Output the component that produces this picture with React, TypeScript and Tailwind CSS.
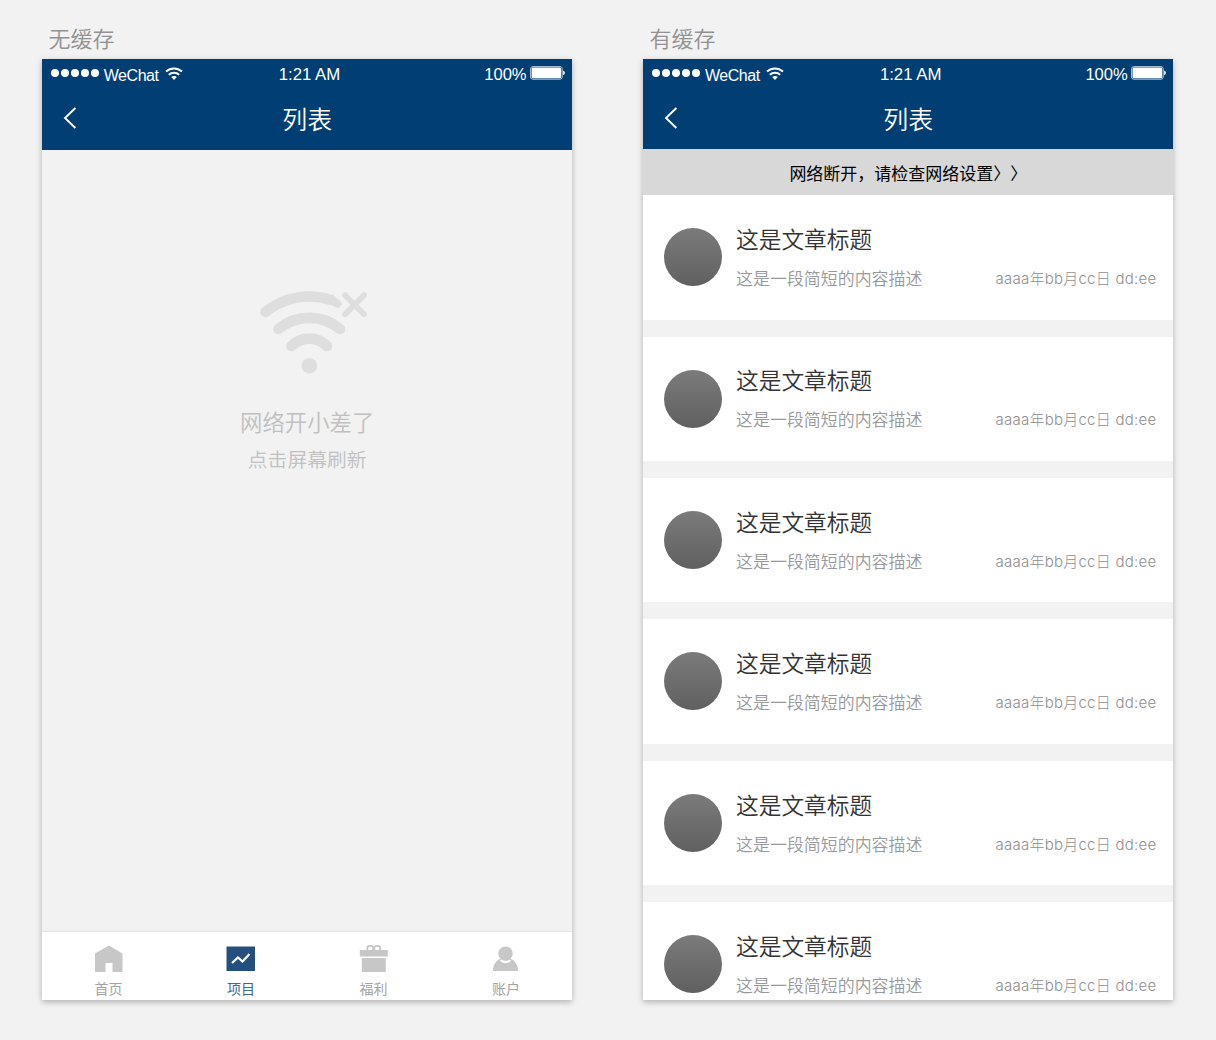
import React from "react";

const cjk = "font-['Noto_Sans_CJK_SC',sans-serif]";
const latin = "font-['Liberation_Sans','Noto_Sans_CJK_SC',sans-serif]";
const dateFont = "font-['Inter','Noto_Sans_CJK_SC',sans-serif]";

function StatusBar() {
  return (
    <div className={`${latin} grid h-[30px] grid-cols-[236.500px_1fr_88px] items-center whitespace-nowrap text-white`}>
      <div className="-mt-px flex items-center pl-[9px]">
        <div className="-mt-px flex gap-[1.900px]">
          {[0, 1, 2, 3, 4].map((i) => (
            <span key={i} className="size-2 rounded-full bg-white" />
          ))}
        </div>
        <span className="mt-[4px] ml-[5px] w-[61px] text-[16px] leading-[20px] tracking-[-0.450px]">WeChat</span>
        <svg width="18" height="14" viewBox="0 0 18 14" fill="none" stroke="#fff">
          <path d="M1 4.600C5.500.500 12.500.500 17 4.600" strokeWidth="2" />
          <path d="M3.800 7.700c3-2.700 7.400-2.700 10.400 0" strokeWidth="1.900" />
          <path d="M6.200 10.100c1.600-1.400 4-1.400 5.600 0L9 13z" fill="#fff" stroke="none" />
        </svg>
      </div>
      <span className="mt-[2px] text-[16.800px] leading-[20px]">1:21 AM</span>
      <div className="flex items-center">
        <span className="mt-[2px] w-[46px] text-[16.600px] leading-[20px]">100%</span>
        <svg className="-mt-[2px]" width="36" height="14" viewBox="0 0 36 14">
          <rect x="0.6" y="0.6" width="31.6" height="12.6" rx="2.2" fill="none" stroke="#b5c8da" strokeWidth="1" />
          <rect x="1.6" y="1.6" width="29.6" height="10.6" rx="1.2" fill="#fff" />
          <path d="M33.200 4.600c2.200.800 2.200 3.800 0 4.600z" fill="#fff" />
        </svg>
      </div>
    </div>
  );
}

function Header({ className }: { className: string }) {
  return (
    <header className={`bg-[#003e73] ${className}`}>
      <StatusBar />
      <div className="grid h-[58px] grid-cols-[1fr_auto_1fr] items-center">
        <svg className="ml-[21px]" width="14" height="22" viewBox="0 0 14 22" fill="none" stroke="#fff" strokeWidth="1.9">
          <path d="M12.400 1L2 11l10.400 10" />
        </svg>
        <h1 className={`${cjk} text-[25px] leading-[36px] font-[350] text-white`}>列表</h1>
      </div>
    </header>
  );
}

function OfflineIcon() {
  return (
    <svg width="112" height="90" viewBox="258 287 112 90" fill="none" stroke="#dedede" strokeLinecap="round">
      <g strokeWidth="10.6">
        <path d="M265.500 312A71 71 0 0 1 309 296.500" />
        <path d="M309 296.500A71 71 0 0 1 331 300" />
        <path d="M278.500 329A48 48 0 0 1 340 329" />
        <path d="M291.500 346A25 25 0 0 1 327 346" />
      </g>
      <path d="M333 295l8 7.500c.8.8.8 1.500 0 2.500-1.600 2.600-3 3-5 1.800l-6-3z" fill="#dedede" strokeWidth="1" />
      <circle cx="309.4" cy="365.8" r="7.8" fill="#dedede" stroke="none" />
      <path d="M345 295.200l19 19M364 295.200l-19 19" strokeWidth="5.8" />
    </svg>
  );
}

const tabs = [
  {
    label: "首页",
    active: false,
    icon: <path d="M1 8.500L14.800.5 28.500 8.500V27H18.500V18H11.500V27H1z" />,
  },
  {
    label: "项目",
    active: true,
    icon: (
      <>
        <path d="M.5 1.500h28.500v24.500H.5z" />
        <path d="M6 18l6-5.500 4.500 4L23.500 9" fill="none" stroke="#fff" strokeWidth="2.2" />
      </>
    ),
  },
  {
    label: "福利",
    active: false,
    icon: (
      <>
        <path d="M.8 5h28v6.500H.8zM2.800 13h24v14h-24z" />
        <g fill="none" stroke="currentColor" strokeWidth="1.7">
          <ellipse cx="11.3" cy="3.5" rx="3.1" ry="2.7" />
          <ellipse cx="18.3" cy="3.5" rx="3.1" ry="2.7" />
        </g>
      </>
    ),
  },
  {
    label: "账户",
    active: false,
    icon: (
      <>
        <path d="M2 26C2 19.500 5.500 15.200 9.500 13.800H19.500C23.500 15.200 27 19.500 27 26z" />
        <path d="M9.800 14.800c2.600 2.700 6.800 2.700 9.400 0" fill="none" stroke="#fff" strokeWidth="2.6" />
        <circle cx="14.5" cy="8.6" r="7.2" />
      </>
    ),
  },
];

function TabBar() {
  return (
    <nav className="grid h-[69px] grid-cols-4 border-t border-[#e6e6e6] bg-white">
      {tabs.map((t) => (
        <div key={t.label} className={`flex flex-col items-center pt-[13px] ${t.active ? "text-[#24507f]" : "text-[#c7c7c7]"}`}>
          <svg width="29" height="28" viewBox="0 0 29 28" fill="currentColor">
            {t.icon}
          </svg>
          <span className={`${cjk} mt-[5px] text-[14px] leading-[20px] ${t.active ? "text-[#3f6794]" : "text-[#a3a3a3]"}`}>
            {t.label}
          </span>
        </div>
      ))}
    </nav>
  );
}

function ListItem() {
  return (
    <article className="flex h-[124.400px] shrink-0 bg-white pt-[33px] pr-[17px] pl-[21px]">
      <div className="size-[58px] shrink-0 rounded-full bg-linear-to-b from-[#7b7b7b] to-[#606060]" />
      <div className={`${cjk} ml-[13.700px] flex-1 whitespace-nowrap font-[350]`}>
        <h2 className="-mt-[4.300px] text-[22.700px] leading-[30px] text-[#333]">这是文章标题</h2>
        <div className="mt-[12px] flex items-center justify-between leading-[24px] text-[#999]">
          <p className="text-[16.950px]">这是一段简短的内容描述</p>
          <time className={`${dateFont} mt-[2px] text-[15px] leading-[22px] font-light tracking-[0.250px] word-spacing-[1px] text-[#8f8f8f]`}>
            aaaa年bb月cc日 dd:ee
          </time>
        </div>
      </div>
    </article>
  );
}

function Board({ title, children }: { title: string; children: React.ReactNode }) {
  return (
    <section className="w-[530px]">
      <div className={`${cjk} pl-[6.200px] text-[22px] leading-[32px] font-[350] text-[#919191]`}>{title}</div>
      <div className="mt-[6px] flex h-[941px] flex-col overflow-hidden bg-[#f2f2f2] shadow-[0_2px_6px_rgba(0,0,0,0.280)]">
        {children}
      </div>
    </section>
  );
}

export default function App() {
  return (
    <main className="flex h-[1040px] w-[1216px] gap-[71.200px] overflow-hidden bg-[#f2f2f2] pt-[21px] pl-[42.200px]">
      <Board title="无缓存">
        <Header className="h-[90.500px] shrink-0" />
        <div className={`${cjk} flex flex-1 flex-col items-center pt-[137.500px] text-[#c0c0c0]`}>
          <div className="ml-[14px]">
            <OfflineIcon />
          </div>
          <p className="mt-[28px] text-[22.400px] leading-[32px] font-[350]">网络开小差了</p>
          <p className="mt-[7px] text-[19.800px] leading-[30px] font-[350]">点击屏幕刷新</p>
        </div>
        <TabBar />
      </Board>
      <Board title="有缓存">
        <Header className="h-[89.500px] shrink-0" />
        <div
          className={`${cjk} h-[47px] shrink-0 bg-[#d8d8d8] text-center text-[17px] leading-[47.500px] text-black [text-spacing-trim:space-all]`}
        >
          网络断开，请检查网络设置〉〉
        </div>
        <div className="-mt-[0.200px] flex flex-col gap-[17px]">
          {[0, 1, 2, 3, 4, 5].map((i) => (
            <ListItem key={i} />
          ))}
        </div>
      </Board>
    </main>
  );
}
